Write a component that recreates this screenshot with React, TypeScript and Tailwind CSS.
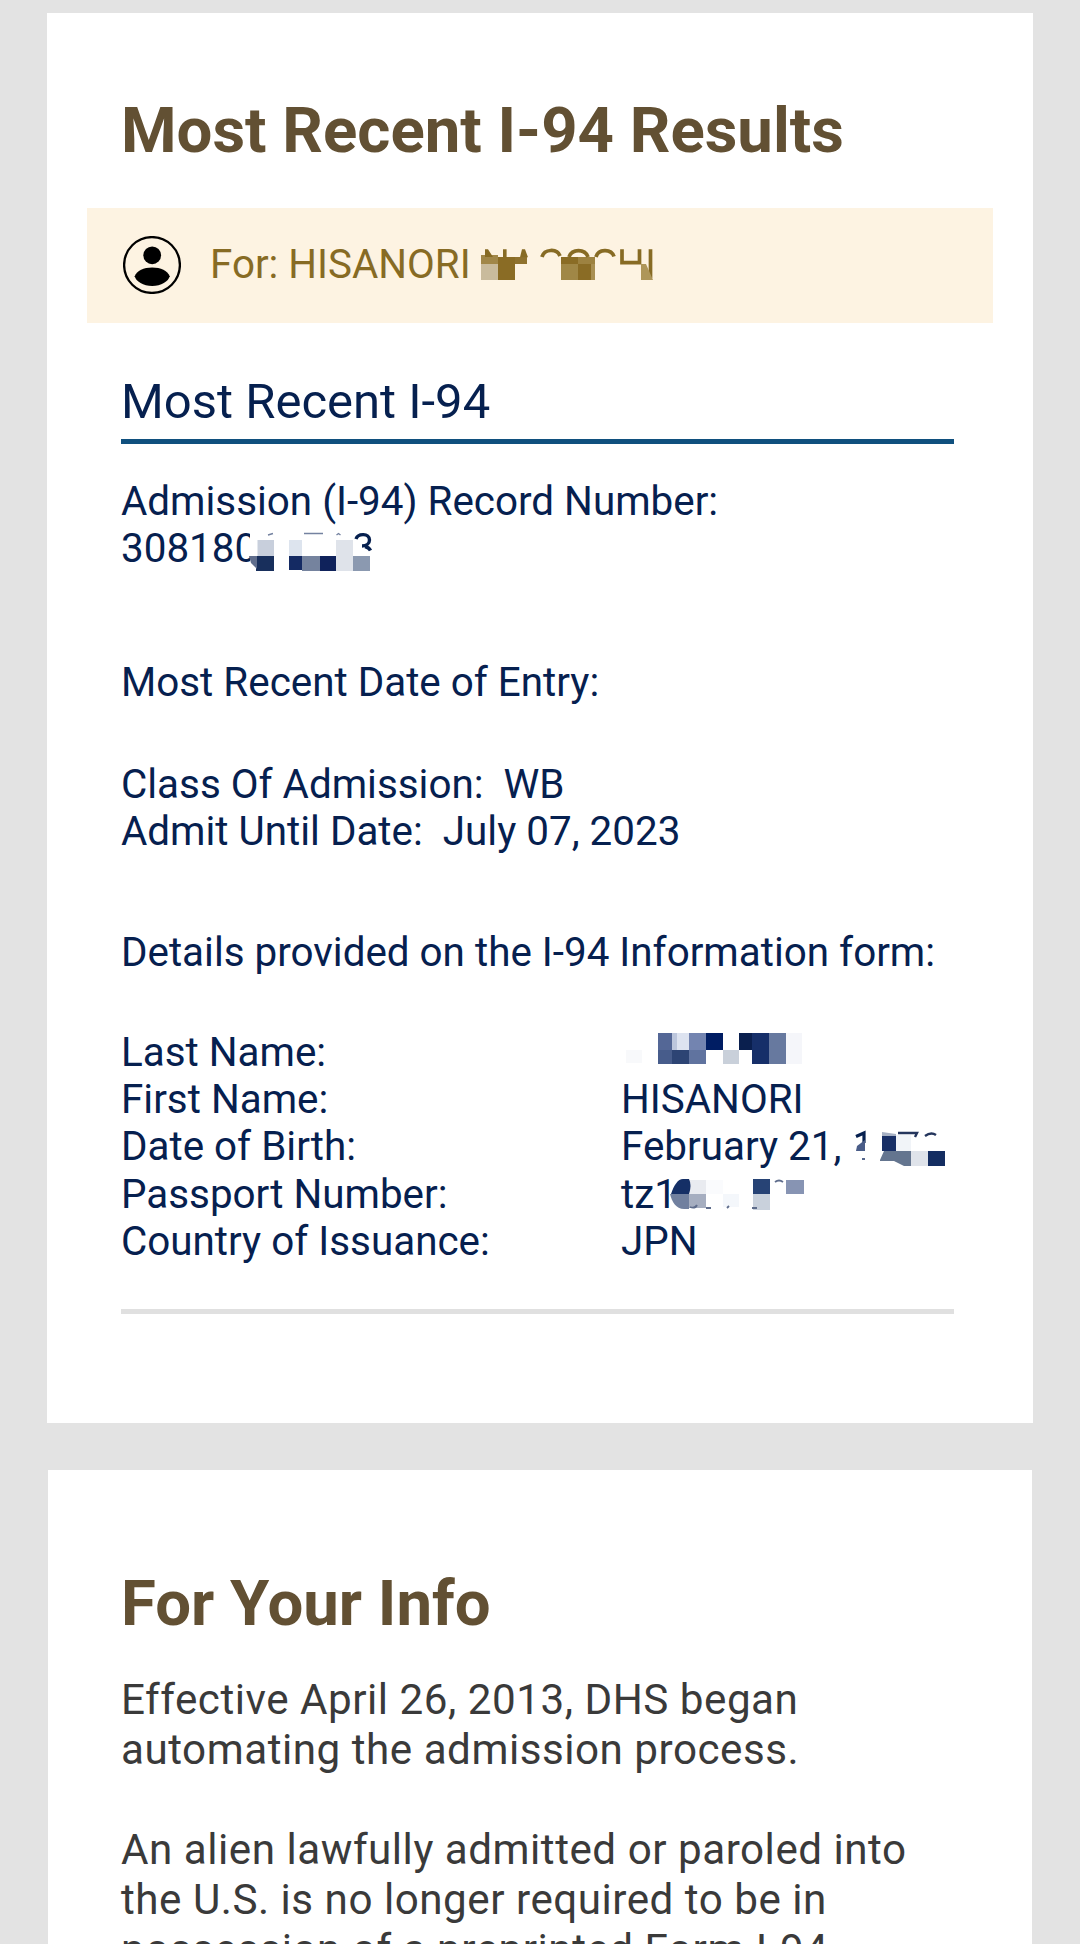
import React from "react";

type Cell = [x: number, y: number, w: number, h: number, fill: string];

function Mosaic({
  x,
  y,
  w,
  h,
  cells,
  className,
  children,
}: {
  x: number;
  y: number;
  w: number;
  h: number;
  cells: Cell[];
  className: string;
  children?: React.ReactNode;
}) {
  return (
    <svg className={`absolute ${className}`} width={w} height={h} viewBox={`${x} ${y} ${w} ${h}`} aria-hidden="true">
      {cells.map(([cx, cy, cw, ch, fill], i) => (
        <rect key={i} x={cx} y={cy} width={cw} height={ch} fill={fill} />
      ))}
      {children}
    </svg>
  );
}

function PersonIcon() {
  return (
    <svg className="-mt-[1px] shrink-0" width="58" height="58" viewBox="0 0 58 58" aria-hidden="true">
      <circle cx="29" cy="29" r="27.9" fill="none" stroke="#000" strokeWidth="2.3" />
      <circle cx="29.2" cy="19.3" r="8.9" />
      <path d="M11.7 40.2C14 34.6 20.5 31.4 29.2 31.4S44.4 34.6 46.7 40.2C45.6 45.2 38 50 29.2 50S12.8 45.2 11.7 40.2Z" />
    </svg>
  );
}

function Row({ label, children }: { label: string; children?: React.ReactNode }) {
  return (
    <div className="grid grid-cols-[500px_1fr]">
      <dt>{label}</dt>
      <dd className="relative h-[47.3px] whitespace-nowrap">{children}</dd>
    </div>
  );
}

export default function App() {
  return (
    <div className="h-[1944px] w-[1080px] overflow-hidden bg-[#e3e3e3] pt-[13px] font-['Roboto',sans-serif]">
      <section className="ml-[47px] h-[1410px] w-[986px] bg-white px-[40px] pt-[80px]">
        <h1 className="pl-[34px] text-[63.5px] leading-[76px] font-bold whitespace-nowrap text-[#625033]">
          Most Recent I-94 Results
        </h1>

        <div className="relative mt-[39px] flex h-[115px] items-center bg-[#fdf3e2] pl-[36px] text-[40.35px] leading-[47px] text-[#876b24]">
          <PersonIcon />
          <span className="-mt-[2px] ml-[29px]">For: HISANORI</span>
          <Mosaic
            className="top-[36px] left-[391px]"
            x={478}
            y={244}
            w={180}
            h={40}
            cells={[
              [481, 255, 17, 9, "#a18748"],
              [481, 264, 17, 16, "#c9bb9c"],
              [498, 257, 17, 23, "#8a6c25"],
              [515, 257, 12, 7, "#8f722e"],
              [561, 257, 17, 7, "#8a6c25"],
              [578, 257, 17, 7, "#9d8240"],
              [561, 264, 17, 16, "#a08746"],
              [578, 264, 13, 16, "#8a6c25"],
              [591, 264, 4, 16, "#a98f52"],
            ]}
          >
            <path d="M485 249.300h3l5 7.700h-8ZM503 249.300h3.600v8H503ZM522 249.300h3l3 8h-8Z" fill="#876b24" />
            <path
              d="M542 257C544 249 557 248 560 256M569 257C572 248.500 585 248.500 588 257M596 257C598 249 611 248 614 256.500M622 249.300v13.300h17.500V249.300M650.500 249.300v29"
              fill="none"
              stroke="#876b24"
              strokeWidth="3.700"
            />
            <path d="M641 264h5l7 16h-12Z" fill="#ae9659" />
          </Mosaic>
        </div>

        <div className="pr-[39px] pl-[34px] text-[40.38px] leading-[47.4px] text-[#06204f]">
          <h2 className="mt-[48px] h-[73px] border-b-[5px] border-[#10507e] text-[49px] leading-[61px]">
            Most Recent I-94
          </h2>

          <div className="mt-[34px]">
            <p className="whitespace-nowrap">Admission (I-94) Record Number:</p>
            <p className="relative">
              308180
              <Mosaic
                className="top-[3px] left-[125px]"
                x={246}
                y={528}
                w={132}
                h={48}
                cells={[
                  [250, 528, 128, 48, "#fff"],
                  [257.5, 540, 16.500, 16, "#c8cfdc"],
                  [256, 556, 18, 15, "#182f5c"],
                  [289, 540, 13, 16, "#dde4ee"],
                  [289, 556, 13, 14, "#142a63"],
                  [302, 556, 18, 15, "#75839e"],
                  [320, 556, 16, 15, "#0f225b"],
                  [336, 540, 17, 31, "#dfe3ea"],
                  [353, 556, 17, 15, "#8b99b0"],
                ]}
              >
                <path d="M249 556h8v13l-6-6Z" fill="#5f6d8c" />
                <path d="M268 535l5-1.500M304 533.500h19M336.500 535l2-1.500 2 1.500" fill="none" stroke="#7482a0" strokeWidth="1.400" />
                <path d="M356 539C358 533 369.500 533 369.500 540 369.500 544 366 546 362 546M365 546.500q4 1 5.500 4" fill="none" stroke="#06204f" strokeWidth="3.400" />
              </Mosaic>
            </p>
          </div>

          <p className="mt-[86px]">Most Recent Date of Entry:</p>

          <div className="mt-[54.6px] whitespace-pre">
            <p>Class Of Admission:  WB</p>
            <p>Admit Until Date:  July 07, 2023</p>
          </div>

          <p className="mt-[73.4px] whitespace-nowrap">Details provided on the I-94 Information form:</p>

          <dl className="mt-[52.4px] leading-[47.3px]">
            <Row label="Last Name:">
              <Mosaic
                className="-top-[1px] left-[0px]"
                x={621}
                y={1028}
                w={190}
                h={40}
                cells={[
                  [626, 1050, 16, 13, "#f8f9fb"],
                  [658, 1033, 14, 17, "#546796"],
                  [672, 1033, 17, 17, "#dde3f0"],
                  [672, 1033, 5, 17, "#bcc6dc"],
                  [689, 1033, 17, 17, "#7384b0"],
                  [706, 1033, 17, 17, "#001d63"],
                  [739, 1033, 13, 17, "#0a1f4e"],
                  [752, 1033, 17, 31, "#162f69"],
                  [769, 1033, 17, 31, "#67799f"],
                  [786, 1033, 16, 31, "#f5f6fa"],
                  [658, 1050, 14, 14, "#475c8b"],
                  [672, 1050, 17, 14, "#2d4474"],
                  [689, 1050, 17, 14, "#60739f"],
                  [723, 1050, 16, 14, "#c9d0da"],
                ]}
              />
            </Row>
            <Row label="First Name:">HISANORI</Row>
            <Row label="Date of Birth:">
              February 21,
              <Mosaic
                className="top-[2px] left-[229px]"
                x={850}
                y={1125}
                w={100}
                h={46}
                cells={[
                  [882, 1135, 14, 16, "#182f66"],
                  [896, 1135, 15, 16, "#f1f4f8"],
                  [911, 1151, 17, 15, "#dfe3ea"],
                  [928, 1151, 17, 15, "#142d61"],
                ]}
              >
                <path d="M856 1136.500l8-3.500v10" fill="none" stroke="#06204f" strokeWidth="3.200" />
                <path d="M857 1146l8-6v11h-9Z" fill="#4a5d88" />
                <path d="M862 1159h3" stroke="#56678c" strokeWidth="2" />
                <path d="M880 1160l4-9h27v15h-7l-10-5h-14Z" fill="#64758f" />
                <path d="M882 1132l14 2v2h-14Z" fill="#a6b0c3" />
                <path d="M898 1133h19l-2 4M925 1136q6-4.500 11-1" fill="none" stroke="#24355c" strokeWidth="2.400" />
              </Mosaic>
            </Row>
            <Row label="Passport Number:">
              tz1
              <Mosaic
                className="top-[1px] left-[46px]"
                x={667}
                y={1171}
                w={150}
                h={42}
                cells={[
                  [689, 1179, 17, 14, "#e9ebf0"],
                  [689, 1193, 17, 14, "#a6aec0"],
                  [706, 1179, 17, 14, "#fafbfd"],
                  [723, 1193, 16, 13, "#f4f7fb"],
                  [753, 1178, 17, 15, "#274375"],
                  [753, 1193, 17, 16, "#c9d1dc"],
                  [786, 1179, 18, 14, "#8794b3"],
                ]}
              >
                <path d="M671 1193C674 1184 678 1178 683 1178h6q3 6 0 15Z" fill="#152f66" />
                <path d="M670 1193h19v15h-5c-8 0-12-7-14-15Z" fill="#71809f" />
                <path d="M690 1206q5 2 7-2M706 1207h5M727 1207l2-2M752 1207h5M775 1181q4-3 8 0" fill="none" stroke="#5f6d8c" strokeWidth="1.800" />
              </Mosaic>
            </Row>
            <Row label="Country of Issuance:">JPN</Row>
          </dl>

          <hr className="mt-[43.6px] border-t-[5px] border-[#e0e0e0]" />
        </div>
      </section>

      <section className="mt-[47px] ml-[48px] h-[480px] w-[984px] bg-white pt-[96px] pl-[73px]">
        <h1 className="text-[63.5px] leading-[76px] font-bold text-[#625033]">For Your Info</h1>
        <div className="mt-[33px] text-[42.2px] leading-[50.1px] tracking-[0.51px] whitespace-nowrap text-[#3a3a3a]">
          <p>
            Effective April 26, 2013, DHS began
            <br />
            automating the admission process.
          </p>
          <p className="mt-[50px]">
            An alien lawfully admitted or paroled into
            <br />
            the U.S. is no longer required to be in
            <br />
            possession of a preprinted Form I-94.
          </p>
        </div>
      </section>
    </div>
  );
}
